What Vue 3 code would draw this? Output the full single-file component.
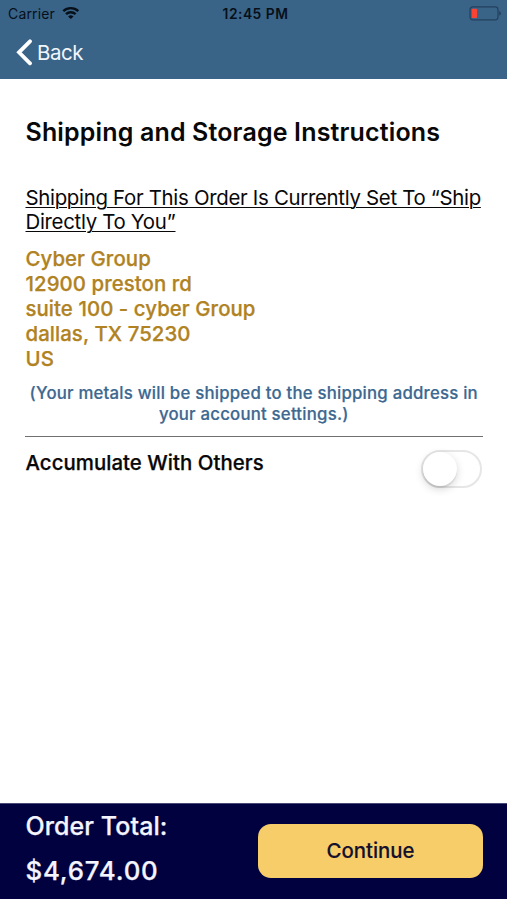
<script setup>
import { ref } from 'vue'

const addressLines = [
  'Cyber Group',
  '12900 preston rd',
  'suite 100 - cyber Group',
  'dallas, TX 75230',
  'US',
]
const accumulate = ref(false)
</script>

<template>
  <div class="screen">
    <header class="header">
      <div class="status">
        <div class="status-left">
          <span class="carrier">Carrier</span>
          <svg class="wifi" width="18" height="14" viewBox="0 0 18 14">
            <g fill="none" stroke="#071019" stroke-width="2.4">
              <path d="M1.3 5.1a11 11 0 0 1 15 0" />
              <path d="M4 8.1a7 7 0 0 1 9.6 0" />
            </g>
            <path d="M8.8 13 6.1 10.4a4 4 0 0 1 5.4 0z" fill="#071019" />
          </svg>
        </div>
        <span class="clock">12:45 PM</span>
        <svg class="battery" width="33" height="15" viewBox="0 0 33 15">
          <rect x="1" y="0.9" width="28" height="13" rx="2.8" fill="none" stroke="#23415c" stroke-width="1.2" />
          <rect x="2.8" y="2.7" width="5.2" height="9.4" rx="0.8" fill="#fb4334" />
          <path d="M30.2 5v4.8q1.8-.9 1.8-2.4T30.2 5z" fill="#23415c" />
        </svg>
      </div>
      <div class="nav">
        <svg class="chevron" width="17" height="27" viewBox="0 0 17 27">
          <path d="M15 2.3 4 13.3 15 24.3" fill="none" stroke="#fff" stroke-width="3.8" stroke-linecap="round" />
        </svg>
        <span class="back">Back</span>
      </div>
    </header>

    <main class="content">
      <h1 class="title">Shipping and Storage Instructions</h1>
      <p class="subtitle">Shipping For This Order Is Currently Set To “Ship<br />Directly To You”</p>
      <address class="address">
        <div v-for="line in addressLines" :key="line">{{ line }}</div>
      </address>
      <p class="note">(Your metals will be shipped to the shipping address in<br />your account settings.)</p>
      <div class="option">
        <span class="option-label">Accumulate With Others</span>
        <button class="switch" role="switch" :aria-checked="accumulate" @click="accumulate = !accumulate">
          <span class="knob" :class="{ on: accumulate }"></span>
        </button>
      </div>
    </main>

    <footer class="footer">
      <div class="total">
        <span class="total-label">Order Total:</span>
        <span class="amount">$4,674.00</span>
      </div>
      <button class="continue">Continue</button>
    </footer>
  </div>
</template>

<style>
body {
  background: #fff;
}
</style>

<style scoped>
.screen {
  width: 507px;
  height: 900px;
  display: flex;
  flex-direction: column;
  box-sizing: border-box;
  padding-bottom: 1.5px;
  background: #fff;
  color: #080808;
  font-family: Inter, "Liberation Sans", sans-serif;
  overflow: hidden;
  white-space: nowrap;
}
.header {
  height: 79px;
  flex: none;
  box-sizing: border-box;
  background: #3a6388;
}
.status {
  height: 27px;
  display: grid;
  grid-template-columns: 1fr auto 1fr;
  align-items: center;
  padding: 0 5px 0 8px;
  color: #071019;
}
.status-left {
  display: flex;
  align-items: center;
  height: 27px;
  gap: 7px;
}
.wifi {
  margin-top: -1px;
}
.carrier {
  font-size: 14px;
  line-height: 27px;
  letter-spacing: 0.15px;
}
.clock {
  font-size: 13.8px;
  line-height: 26px;
  padding: 1px 0 0 1px;
  font-weight: 600;
  letter-spacing: 0.5px;
}
.battery {
  justify-self: end;
}
.nav {
  display: flex;
  align-items: center;
  height: 51px;
  padding-left: 14.5px;
  gap: 5.5px;
}
.back {
  color: #f0f5fb;
  font-size: 20.5px;
  line-height: 50px;
  letter-spacing: -0.5px;
}
.content {
  flex: 1;
  padding: 37px 24.5px 0 25px;
}
.title {
  margin: 0;
  font-size: 25px;
  line-height: 32px;
  font-weight: 600;
  letter-spacing: 0.15px;
  text-indent: 0.5px;
}
.subtitle {
  margin: 37.5px 0 0 0.5px;
  font-size: 20.4px;
  line-height: 24.6px;
  letter-spacing: -0.3px;
  text-decoration: underline;
  text-decoration-thickness: 1.3px;
  text-underline-offset: 2px;
}
.address {
  margin: 12.7px 0 0 0.5px;
  font-style: normal;
  font-size: 20.4px;
  line-height: 24.8px;
  font-weight: 500;
  letter-spacing: 0.06px;
  color: #b08222;
  -webkit-text-stroke: 0.25px #b08222;
}
.note {
  margin: 12px 0 0;
  font-size: 16.8px;
  line-height: 20.4px;
  font-weight: 500;
  letter-spacing: 0.21px;
  text-align: center;
  color: #3d6890;
  -webkit-text-stroke: 0.2px #3d6890;
}
.option {
  margin-top: 12.3px;
  border-top: 1px solid #707070;
  display: flex;
  justify-content: space-between;
  align-items: flex-start;
}
.option-label {
  font-size: 20.4px;
  line-height: 25px;
  font-weight: 500;
  margin: 13px 0 0 0.5px;
  letter-spacing: 0.04px;
  -webkit-text-stroke: 0.25px #080808;
}
.switch {
  box-sizing: border-box;
  width: 61px;
  height: 38px;
  margin: 13px 0.7px 0 0;
  padding: 0;
  border: 2px solid #e6e6e6;
  border-radius: 19px;
  background: #fff;
}
.knob {
  display: block;
  width: 34px;
  height: 34px;
  border-radius: 50%;
  background: #fff;
  box-shadow: 0 3px 8px rgba(0, 0, 0, 0.17), 0 2px 1px rgba(0, 0, 0, 0.08);
}
.knob.on {
  margin-left: 23px;
}
.footer {
  height: 96px;
  flex: none;
  box-sizing: border-box;
  display: flex;
  justify-content: space-between;
  padding: 6px 24px 0 25.5px;
  border-top: 1px solid #4a4a78;
  background: #010140;
}
.total {
  display: flex;
  flex-direction: column;
  gap: 13px;
  color: #f5f5ff;
  font-size: 25px;
  line-height: 32px;
  font-weight: 500;
  letter-spacing: 0.08px;
  -webkit-text-stroke: 0.25px #f5f5ff;
}
.amount {
  font-size: 25.8px;
  letter-spacing: 0.8px;
}
.continue {
  width: 225px;
  height: 54px;
  margin-top: 14px;
  padding: 0 0 1px;
  border: 0;
  border-radius: 13px;
  background: #f7cd6a;
  color: #13102d;
  font-family: inherit;
  font-size: 20.4px;
  font-weight: 500;
  -webkit-text-stroke: 0.15px #13102d;
}
</style>
